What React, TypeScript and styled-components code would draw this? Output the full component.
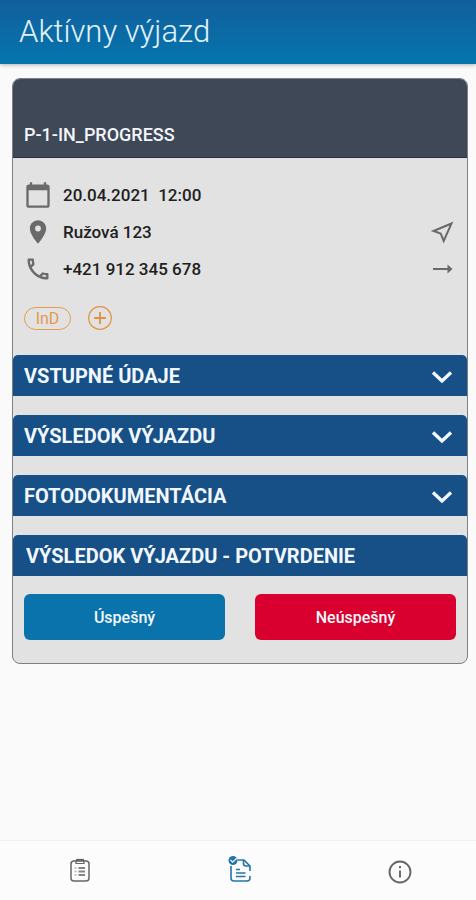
import React from "react";
import styled, { createGlobalStyle } from "styled-components";

const GlobalStyle = createGlobalStyle`
  *, *::before, *::after { box-sizing: border-box; }
  body {
    margin: 0;
    background: #fafafa;
    font-family: Roboto, "Liberation Sans", sans-serif;
  }
  button { font-family: inherit; cursor: pointer; }
  svg { display: block; flex: none; }
`;

const Page = styled.div`
  display: flex;
  flex-direction: column;
  min-height: 100vh;
`;

const TopBar = styled.header`
  display: flex;
  align-items: center;
  height: 64px;
  padding: 0 19px;
  background: linear-gradient(#115f9c, #0575ad);
  box-shadow: 0 1px 4px rgba(0, 0, 0, 0.3);
`;

const Title = styled.h1`
  margin: 0;
  color: #e2f2fc;
  font-size: 31px;
  font-weight: 300;
  line-height: 40px;
`;

const Content = styled.main`
  flex: 1;
  padding: 14px 8px 24px 12px;
`;

const Card = styled.article`
  overflow: hidden;
  border: 1px solid #7d8187;
  border-radius: 8px;
  background: #e2e2e2;
`;

const CardHead = styled.div`
  display: flex;
  align-items: flex-end;
  height: 79px;
  padding: 0 11px 12px;
  border-bottom: 1px solid #27323f;
  background: #3e4857;
`;

const CardTitle = styled.h2`
  margin: 0;
  color: #f3f5f8;
  font-size: 18px;
  font-weight: 500;
  line-height: 20px;
`;

const Details = styled.div`
  padding: 18px 10px 24px 11px;
`;

const DetailRow = styled.div`
  display: flex;
  align-items: center;
  gap: 11px;
  height: 37px;
  color: #6a6a6a;
`;

const DetailText = styled.span`
  flex: 1;
  color: #202020;
  font-size: 17px;
  font-weight: 500;
  white-space: pre;
`;

const IconButton = styled.button`
  display: flex;
  padding: 0;
  border: 0;
  background: none;
  color: inherit;
`;

const Tags = styled.div`
  display: flex;
  align-items: center;
  gap: 16px;
  margin-top: 18px;
  height: 26px;
`;

const Tag = styled.span`
  width: 47px;
  border: 1px solid #e79a4c;
  border-radius: 12px;
  color: #e79a4c;
  font-size: 16px;
  line-height: 21px;
  text-align: center;
`;

const AddButton = styled(IconButton)`
  color: #e3913c;
`;

const Sections = styled.div`
  display: flex;
  flex-direction: column;
  gap: 19px;
`;

const SectionTitle = styled.h3`
  margin: 0;
  font: inherit;
`;

const sectionBar = `
  display: flex;
  align-items: center;
  justify-content: space-between;
  width: 100%;
  height: 41px;
  border: 0;
  border-radius: 5px 5px 0 0;
  background: #175087;
  color: #f2f7fd;
  font-size: 20px;
  font-weight: 700;
  line-height: 24px;
  text-align: left;
`;

const SectionToggle = styled.button`
  ${sectionBar}
  padding: 0 13px 0 11px;
`;

const SectionHeader = styled.div`
  ${sectionBar}
  padding: 0 13px;
`;

const Actions = styled.div`
  display: grid;
  grid-template-columns: 1fr 1fr;
  gap: 30px;
  padding: 18px 11px 23px;
`;

const ActionButton = styled.button<{ $color: string }>`
  height: 46px;
  border: 0;
  border-radius: 6px;
  background: ${(p) => p.$color};
  color: #f4f8fc;
  font-size: 16px;
  font-weight: 500;
`;

const BottomNav = styled.nav`
  display: flex;
  justify-content: space-between;
  height: 60px;
  padding: 0 46px 0 50px;
  border-top: 1px solid #f1f1f1;
  background: #fcfcfc;
`;

const NavButton = styled.button<{ $active?: boolean }>`
  display: flex;
  align-items: center;
  justify-content: center;
  width: 60px;
  padding: 0;
  border: 0;
  background: none;
  color: ${(p) => (p.$active ? "#2474a8" : "#666")};
`;

const CalendarIcon = () => (
  <svg width="28" height="28" viewBox="0 0 24 24" fill="currentColor" aria-hidden="true">
    <path d="M20 3h-1V1h-2v2H7V1H5v2H4c-1.1 0-2 .9-2 2v16c0 1.1.9 2 2 2h16c1.1 0 2-.9 2-2V5c0-1.1-.9-2-2-2zm0 18H4V8h16v13z" />
  </svg>
);

const PinIcon = () => (
  <svg width="28" height="28" viewBox="0 0 24 24" fill="currentColor" aria-hidden="true">
    <path d="M12 2C8.13 2 5 5.13 5 9c0 5.25 7 13 7 13s7-7.75 7-13c0-3.87-3.13-7-7-7zm0 9.500a2.500 2.500 0 1 1 0-5 2.500 2.500 0 0 1 0 5z" />
  </svg>
);

const PhoneIcon = () => (
  <svg width="28" height="28" viewBox="0 0 24 24" fill="currentColor" aria-hidden="true">
    <path d="M6.540 5c.06.89.21 1.760.45 2.590l-1.200 1.200c-.41-1.200-.67-2.470-.76-3.790h1.510m9.860 12.020c.85.24 1.720.39 2.600.45v1.490c-1.320-.09-2.590-.35-3.800-.75l1.200-1.190M7.500 3H4c-.55 0-1 .45-1 1 0 9.390 7.610 17 17 17 .55 0 1-.45 1-1v-3.490c0-.55-.45-1-1-1-1.240 0-2.450-.2-3.570-.57-.1-.04-.21-.05-.31-.05-.26 0-.51.1-.71.29l-2.200 2.200c-2.830-1.450-5.150-3.760-6.590-6.590l2.200-2.200c.28-.28.36-.67.25-1.020C8.700 6.450 8.500 5.250 8.500 4c0-.55-.45-1-1-1z" />
  </svg>
);

const NavigateIcon = () => (
  <svg width="28" height="28" viewBox="0 0 28 28" fill="none" stroke="currentColor" strokeWidth="2" aria-hidden="true">
    <path d="M22.500 5.500 4.500 13l7.200 2.600 3 7.400z" />
  </svg>
);

const ArrowIcon = () => (
  <svg width="28" height="28" viewBox="0 0 28 28" fill="currentColor" aria-hidden="true">
    <path d="M4 13h14.500V9.500L23.500 14l-5 4.500V15H4z" />
  </svg>
);

const PlusIcon = () => (
  <svg width="26" height="26" viewBox="0 0 26 26" fill="none" stroke="currentColor" aria-hidden="true">
    <circle cx="13" cy="13" r="11.300" strokeWidth="1.200" />
    <path d="M13 7v12M7 13h12" strokeWidth="1.800" />
  </svg>
);

const ChevronIcon = () => (
  <svg width="24" height="24" viewBox="0 0 24 24" fill="none" stroke="currentColor" strokeWidth="3.400" aria-hidden="true">
    <path d="m3 8.500 9 8.500 9-8.500" />
  </svg>
);

const ClipboardIcon = () => (
  <svg width="24" height="28" viewBox="0 0 24 28" fill="none" stroke="currentColor" aria-hidden="true">
    <rect x="3" y="4" width="18" height="20" rx="3" strokeWidth="1.500" />
    <path d="M8 3.500v3h8v-3" strokeWidth="1.200" />
    <path d="M8 3h8" strokeWidth="2.200" />
    <path d="M6.500 11h2M6.500 14.500h2M6.500 18h2" strokeWidth="1.500" opacity=".5" />
    <path d="M10.500 11h6.500M10.500 14.500h6.500M10.500 18h6.500" strokeWidth="2" opacity=".8" />
  </svg>
);

const ReportIcon = () => (
  <svg width="28" height="32" viewBox="0 0 28 32" fill="none" stroke="currentColor" strokeWidth="1.600" aria-hidden="true">
    <path d="M11.500 5h6.500l6 6v5M5 11v12q0 3 3 3h13q3 0 3-3v-2" />
    <path d="M17.500 5v3.500q0 2.500 2.500 2.500h4" />
    <path d="M10 14.500h4M10 18h9.500M10 21.500h9.500" />
    <circle cx="7" cy="5.500" r="4.500" fill="currentColor" stroke="none" />
    <path d="m4.500 5 2.200 2.200L11 3" stroke="#e6f4fb" strokeWidth="1.300" />
  </svg>
);

const InfoIcon = () => (
  <svg width="24" height="26" viewBox="0 0 24 26" fill="none" stroke="currentColor" strokeWidth="1.900" aria-hidden="true">
    <circle cx="12" cy="14" r="10.500" />
    <path d="M12 12.500v7M12 8v2.200" />
  </svg>
);

const sections = ["VSTUPNÉ ÚDAJE", "VÝSLEDOK VÝJAZDU", "FOTODOKUMENTÁCIA"];

export default function App() {
  return (
    <Page>
      <GlobalStyle />
      <TopBar>
        <Title>Aktívny výjazd</Title>
      </TopBar>
      <Content>
        <Card>
          <CardHead>
            <CardTitle>P-1-IN_PROGRESS</CardTitle>
          </CardHead>
          <Details>
            <DetailRow>
              <CalendarIcon />
              <DetailText>{"20.04.2021  12:00"}</DetailText>
            </DetailRow>
            <DetailRow>
              <PinIcon />
              <DetailText>Ružová 123</DetailText>
              <IconButton type="button" aria-label="Navigovať">
                <NavigateIcon />
              </IconButton>
            </DetailRow>
            <DetailRow>
              <PhoneIcon />
              <DetailText>+421 912 345 678</DetailText>
              <IconButton type="button" aria-label="Zavolať">
                <ArrowIcon />
              </IconButton>
            </DetailRow>
            <Tags>
              <Tag>InD</Tag>
              <AddButton type="button" aria-label="Pridať">
                <PlusIcon />
              </AddButton>
            </Tags>
          </Details>
          <Sections>
            {sections.map((name) => (
              <SectionToggle key={name} type="button" aria-expanded={false}>
                {name}
                <ChevronIcon />
              </SectionToggle>
            ))}
            <SectionHeader>
              <SectionTitle>VÝSLEDOK VÝJAZDU - POTVRDENIE</SectionTitle>
            </SectionHeader>
          </Sections>
          <Actions>
            <ActionButton type="button" $color="#0a73ac">Úspešný</ActionButton>
            <ActionButton type="button" $color="#d9002f">Neúspešný</ActionButton>
          </Actions>
        </Card>
      </Content>
      <BottomNav>
        <NavButton type="button" aria-label="Zoznam">
          <ClipboardIcon />
        </NavButton>
        <NavButton type="button" aria-label="Aktívny výjazd" $active>
          <ReportIcon />
        </NavButton>
        <NavButton type="button" aria-label="Informácie">
          <InfoIcon />
        </NavButton>
      </BottomNav>
    </Page>
  );
}
